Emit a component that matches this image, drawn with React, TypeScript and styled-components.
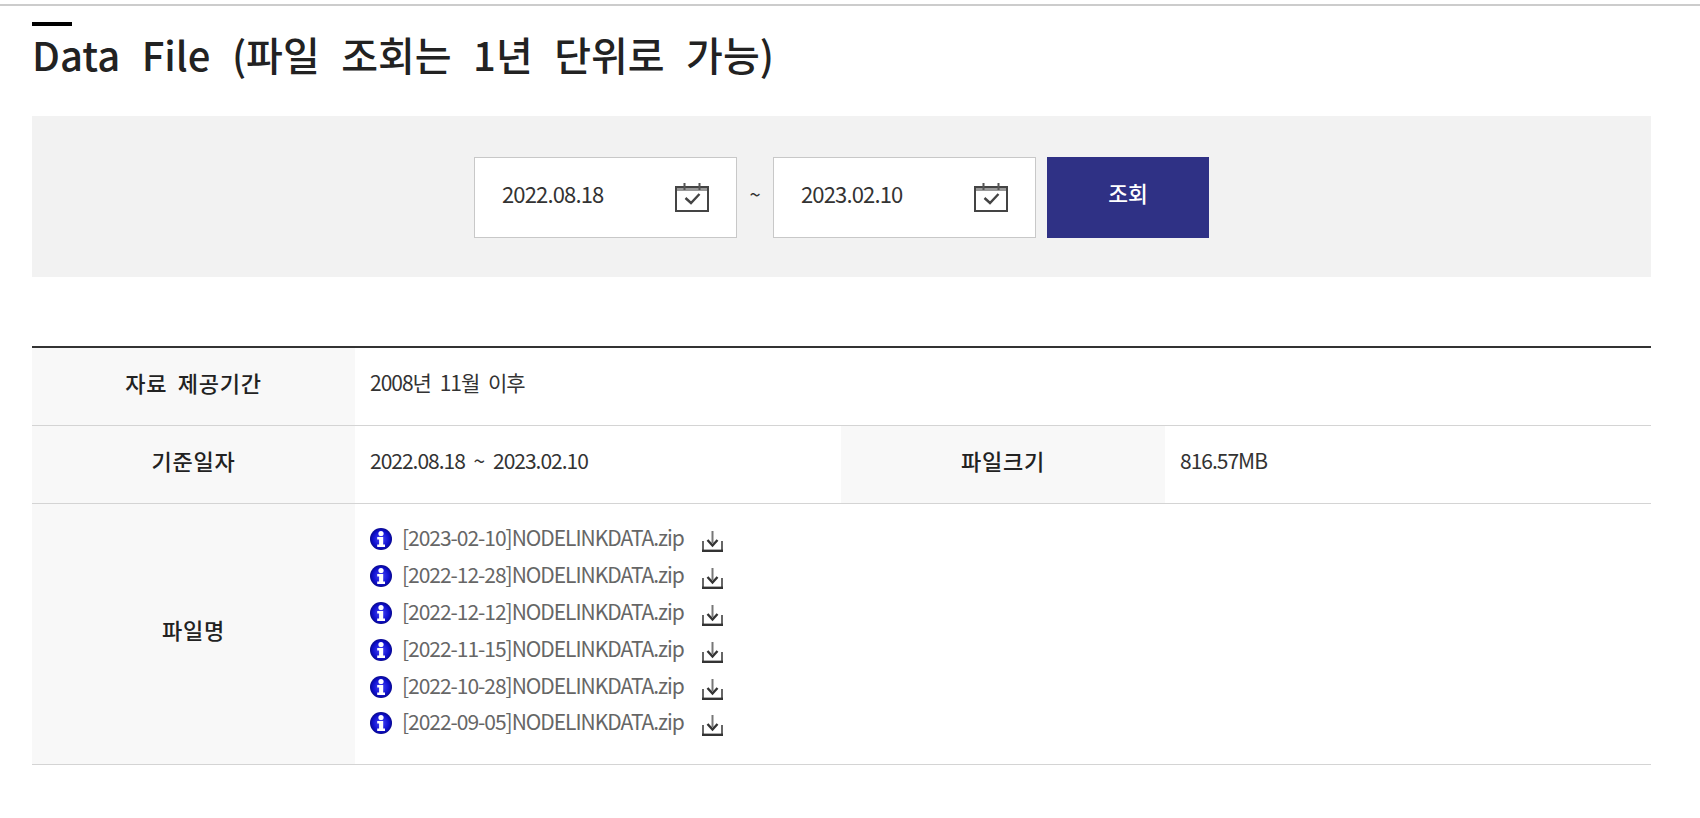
import styled, { createGlobalStyle } from 'styled-components';

const GlobalStyle = createGlobalStyle`
  html, body {
    margin: 0;
    padding: 0;
    background: #fff;
    font-family: 'Noto Sans CJK KR', 'Noto Sans', sans-serif;
    color: #222;
  }
`;

const Page = styled.div`
  height: 818px;
  padding: 4px 49px 0 32px;
  box-sizing: border-box;
  overflow: hidden;
`;

const TopLine = styled.div`
  height: 2px;
  margin: 0 -49px 0 -32px;
  background: #ccc;
`;

const Title = styled.h2`
  position: relative;
  margin: 16px 0 0;
  padding: 3px 0;
  font-size: 40px;
  line-height: 58px;
  font-weight: 500;
  color: #222;
  word-spacing: 12.5px;
  white-space: nowrap;
  &::before {
    content: '';
    position: absolute;
    left: 0;
    top: 0;
    width: 40px;
    height: 4px;
    background: #000;
  }
`;

const SearchPanel = styled.div`
  display: flex;
  justify-content: center;
  align-items: center;
  height: 159px;
  padding-top: 2px;
  margin-top: 30px;
  background: #f2f2f2;
`;

const DateBox = styled.div`
  display: flex;
  align-items: center;
  justify-content: space-between;
  box-sizing: border-box;
  width: 263px;
  height: 81px;
  padding: 0 27px 0 27px;
  background: #fff;
  border: 1px solid #c8c8c8;
  color: #333;
`;

const DateText = styled.span`
  margin-bottom: 10px;
  font-size: 22px;
  letter-spacing: -0.85px;
`;

const Tilde = styled.span`
  width: 36px;
  margin-bottom: 8px;
  text-align: center;
  font-size: 20px;
  color: #333;
`;

const SearchButton = styled.button`
  width: 162px;
  height: 81px;
  margin-left: 11px;
  padding: 0 0 10px;
  border: 0;
  background: #2f3185;
  color: #fff;
  font-family: inherit;
  font-size: 21.5px;
  font-weight: 500;
`;

const InfoTable = styled.table`
  width: 1619px;
  margin-top: 69px;
  border-collapse: collapse;
  table-layout: fixed;
  border-top: 2px solid #333;
`;

const Row = styled.tr`
  border-bottom: 1px solid #d4d4d4;
`;

const HeadCell = styled.th`
  height: 67px;
  padding: 0 0 10px;
  background: #f8f8f8;
  font-size: 22px;
  font-weight: 500;
  letter-spacing: 0.7px;
  word-spacing: 5px;
  color: #222;
  text-align: center;
`;

const Cell = styled.td<{ $flush?: boolean }>`
  padding: ${(p) => (p.$flush ? '0 15px' : '0 15px 10px')};
  font-size: 21px;
  letter-spacing: -1px;
  word-spacing: 5px;
  color: #333;
`;

const FileList = styled.ul`
  list-style: none;
  margin: 0;
  padding: 17px 0 22px;
`;

const FileRow = styled.li`
  display: flex;
  align-items: center;
  height: 36.8px;
`;

const FileName = styled.a`
  margin: 0 18px 4px 10px;
  font-size: 21px;
  letter-spacing: -1.03px;
  color: #666;
`;

const DownloadWrap = styled.span`
  display: flex;
  margin-top: 5px;
`;

const CalendarIcon = () => (
  <svg width="34" height="29" viewBox="0 0 34 29" fill="none">
    <rect x="1" y="4" width="32" height="24" stroke="#444" strokeWidth="2" />
    <path d="M2 6.5h30" stroke="#999" strokeWidth="3" />
    <path d="M9.5 0v7M24.5 0v7" stroke="#555" strokeWidth="2" />
    <path d="M10.5 15l5.5 5L24.5 11" stroke="#444" strokeWidth="2.4" />
  </svg>
);

const InfoIcon = ({ id }: { id: string }) => (
  <svg width="22" height="22" viewBox="0 0 22 22">
    <defs>
      <radialGradient id={id} cx="0.5" cy="0.5" r="0.55">
        <stop offset="0" stopColor="#4a4af8" />
        <stop offset="0.65" stopColor="#1010d0" />
        <stop offset="1" stopColor="#04047a" />
      </radialGradient>
    </defs>
    <circle cx="11" cy="11" r="11" fill={`url(#${id})`} />
    <circle cx="11" cy="5.5" r="2.6" fill="#fff" />
    <path d="M7.2 9h6v7.4h1.8v2.6H7.2v-2.6h1.9v-4.8H7.2z" fill="#fff" />
  </svg>
);

const DownloadIcon = () => (
  <svg width="21" height="21" viewBox="0 0 21 21" fill="none">
    <path d="M10.5 0v12" stroke="#777" strokeWidth="2" />
    <path d="M5.5 9l5 5.5 5-5.5" stroke="#333" strokeWidth="2.4" />
    <path d="M1 10v9M20 10v9" stroke="#666" strokeWidth="2" />
    <path d="M0 19.8h21" stroke="#333" strokeWidth="2.4" />
  </svg>
);

const files = [
  '[2023-02-10]NODELINKDATA.zip',
  '[2022-12-28]NODELINKDATA.zip',
  '[2022-12-12]NODELINKDATA.zip',
  '[2022-11-15]NODELINKDATA.zip',
  '[2022-10-28]NODELINKDATA.zip',
  '[2022-09-05]NODELINKDATA.zip',
];

const App = () => (
  <Page>
    <GlobalStyle />
    <TopLine />
    <Title>Data File (파일 조회는 1년 단위로 가능)</Title>
    <SearchPanel>
      <DateBox>
        <DateText>2022.08.18</DateText>
        <CalendarIcon />
      </DateBox>
      <Tilde>~</Tilde>
      <DateBox>
        <DateText>2023.02.10</DateText>
        <CalendarIcon />
      </DateBox>
      <SearchButton>조회</SearchButton>
    </SearchPanel>
    <InfoTable>
      <colgroup>
        <col width="323" />
        <col width="486" />
        <col width="324" />
        <col width="486" />
      </colgroup>
      <tbody>
        <Row>
          <HeadCell>자료 제공기간</HeadCell>
          <Cell colSpan={3}>2008년 11월 이후</Cell>
        </Row>
        <Row>
          <HeadCell>기준일자</HeadCell>
          <Cell>2022.08.18 ~ 2023.02.10</Cell>
          <HeadCell>파일크기</HeadCell>
          <Cell>816.57MB</Cell>
        </Row>
        <Row>
          <HeadCell>파일명</HeadCell>
          <Cell colSpan={3} $flush>
            <FileList>
              {files.map((name, i) => (
                <FileRow key={name}>
                  <InfoIcon id={`info-${i}`} />
                  <FileName>{name}</FileName>
                  <DownloadWrap>
                    <DownloadIcon />
                  </DownloadWrap>
                </FileRow>
              ))}
            </FileList>
          </Cell>
        </Row>
      </tbody>
    </InfoTable>
  </Page>
);

export default App;
